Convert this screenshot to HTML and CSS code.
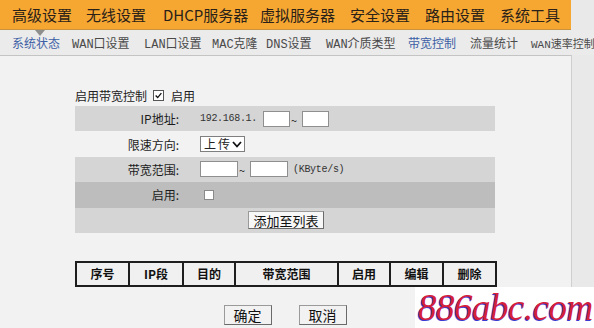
FILE: index.html
```html
<!DOCTYPE html>
<html lang="zh-CN">
<head>
<meta charset="utf-8">
<title>带宽控制</title>
<link rel="stylesheet" href="styles.css">
</head>
<body>
<div class="page">
  <header class="topbar">
    <span class="top-item">高级设置</span>
    <span class="top-item">无线设置</span>
    <span class="top-item">DHCP服务器</span>
    <span class="top-item">虚拟服务器</span>
    <span class="top-item">安全设置</span>
    <span class="top-item">路由设置</span>
    <span class="top-item">系统工具</span>
  </header>
  <nav class="subnav">
    <span class="notch"></span>
    <span class="sub-item active">系统状态</span>
    <span class="sub-item">WAN口设置</span>
    <span class="sub-item">LAN口设置</span>
    <span class="sub-item">MAC克隆</span>
    <span class="sub-item">DNS设置</span>
    <span class="sub-item">WAN介质类型</span>
    <span class="sub-item active">带宽控制</span>
    <span class="sub-item">流量统计</span>
    <span class="sub-item">WAN速率控制</span>
  </nav>
  <main class="panel">
    <div class="form">
      <div class="enable-line">
        <span>启用带宽控制</span>
        <span class="check checked"><svg viewBox="0 0 11 11" width="11" height="11"><path d="M2 5.5 L4.5 8 L9 2.5" fill="none" stroke="#111" stroke-width="1.6"/></svg></span>
        <span>启用</span>
      </div>
      <div class="rows">
        <div class="row shade">
          <span class="label">IP地址:</span>
          <span class="value">
            <span class="mono">192.168.1.</span>
            <span class="box ip"></span>
            <span class="tilde">~</span>
            <span class="box ip"></span>
          </span>
        </div>
        <div class="row">
          <span class="label">限速方向:</span>
          <span class="value">
            <span class="select"><span class="sel-text">上传</span><svg class="sel-arrow" viewBox="0 0 10 7" width="10" height="7"><path d="M1 1 L5 5.5 L9 1" fill="none" stroke="#111" stroke-width="1.8"/></svg></span>
          </span>
        </div>
        <div class="row shade">
          <span class="label">带宽范围:</span>
          <span class="value">
            <span class="box bw"></span>
            <span class="tilde">~</span>
            <span class="box bw"></span>
            <span class="mono unit">(KByte/s)</span>
          </span>
        </div>
        <div class="row dark">
          <span class="label">启用:</span>
          <span class="value"><span class="check small"></span></span>
        </div>
        <div class="row shade">
          <span class="label"></span>
          <span class="value"><span class="btn add">添加至列表</span></span>
        </div>
      </div>
      <table class="list">
        <tr>
          <th class="c1">序号</th>
          <th class="c2">IP段</th>
          <th class="c3">目的</th>
          <th class="c4">带宽范围</th>
          <th class="c5">启用</th>
          <th class="c6">编辑</th>
          <th class="c7">删除</th>
        </tr>
      </table>
      <div class="actions">
        <span class="btn act">确定</span>
        <span class="btn act">取消</span>
      </div>
    </div>
  </main>
  <div class="watermark">886abc.com</div>
</div>
</body>
</html>
```

FILE: styles.css
```css
html, body {
  margin: 0;
  padding: 0;
}
body {
  background: #e9e9e9;
  font-family: "Noto Sans CJK SC", "DejaVu Sans", sans-serif;
  color: #222;
  width: 594px;
  height: 328px;
  overflow: hidden;
}
.page {
  position: relative;
  width: 594px;
  height: 328px;
  overflow: hidden;
}
.topbar {
  width: 559px;
  height: 29px;
  background: #f6a732;
  border-bottom: 1px solid #c9923c;
  display: grid;
  grid-template-columns: 74px 77px 97px 90px 75px 75px 80px;
  padding-left: 12px;
  box-sizing: content-box;
  align-items: center;
  font-size: 15px;
  line-height: 29px;
  color: #2a2118;
  white-space: nowrap;
}
.subnav {
  position: relative;
  height: 25px;
  display: grid;
  grid-template-columns: 60px 72px 68px 54px 60px 82px 62px 61px 62px;
  padding-left: 12px;
  align-items: center;
  font-family: "Liberation Mono", "Noto Sans CJK SC", monospace;
  font-size: 12px;
  color: #4a4a4a;
  white-space: nowrap;
  background: #ebebeb;
}
.sub-item:last-child { font-size: 11px; }
.sub-item.active { color: #3d5fa6; }
.notch {
  position: absolute;
  left: 35px;
  top: 0;
  width: 0;
  height: 0;
  border-left: 5px solid transparent;
  border-right: 5px solid transparent;
  border-top: 6px solid #8e8e8e;
}
.panel {
  width: 571px;
  height: 274px;
  background: #f2f2f2;
  border-top: 1px solid #c4c4c4;
  border-right: 1px solid #cfcfcf;
  box-sizing: content-box;
}
.form {
  padding: 33px 0 0 75px;
  width: 420px;
  font-size: 12px;
}
.enable-line {
  display: flex;
  align-items: center;
  height: 12px;
}
.enable-line .check { margin: 0 7px 0 6px; }
.check {
  display: inline-flex;
  width: 11px;
  height: 11px;
  box-sizing: border-box;
  border: 1px solid #7a7a7a;
  background: #fff;
  align-items: center;
  justify-content: center;
}
.check.checked { border-color: #555; }
.check.small {
  width: 10px;
  height: 10px;
  margin-left: 4px;
  border-color: #8a8a8a;
}
.rows {
  margin-top: 5px;
}
.row {
  display: grid;
  grid-template-columns: 104px 1fr;
  height: 25.4px;
  align-items: center;
}
.row.shade { background: #d5d5d5; }
.row.dark { background: #bdbdbd; }
.label {
  text-align: right;
  color: #1c1c1c;
}
.value {
  display: flex;
  align-items: center;
  padding-left: 21px;
  white-space: nowrap;
}
.mono {
  font-family: "Liberation Mono", monospace;
  font-size: 10px;
  letter-spacing: -0.3px;
  color: #333;
}
.box {
  display: inline-block;
  height: 16px;
  box-sizing: border-box;
  background: #fff;
  border: 1px solid #8f8f8f;
}
.box.ip { width: 27px; }
.row .mono + .box { margin-left: 6px; }
.box.bw { width: 38px; }
.tilde {
  width: 12px;
  font-size: 11px;
  line-height: 10px;
  align-self: flex-start;
  margin-top: 4px;
  padding-left: 1px;
  box-sizing: border-box;
}
.unit { margin-left: 5px; }
.select {
  display: inline-flex;
  align-items: center;
  justify-content: space-between;
  height: 16px;
  box-sizing: border-box;
  width: 45px;
  padding: 0 3px 0 3px;
  background: #fff;
  border: 1px solid #7f7f7f;
  font-size: 12px;
  line-height: 14px;
  white-space: nowrap;
}
.sel-text { letter-spacing: 2px; }
.sel-arrow { flex-shrink: 0; }
.btn {
  display: inline-flex;
  align-items: center;
  justify-content: center;
  box-sizing: border-box;
  background: #f7f7f7;
  border: 1px solid #9a9a9a;
  border-right-color: #6a6a6a;
  border-bottom-color: #6a6a6a;
  color: #111;
  white-space: nowrap;
}
.btn.add {
  margin-left: 48px;
  width: 76px;
  height: 18px;
  font-size: 13px;
}
.list {
  margin-top: 28px;
  width: 420px;
  border-collapse: collapse;
  table-layout: fixed;
}
.list th {
  height: 22px;
  border: 2px solid #1e1e1e;
  font-weight: bold;
  font-size: 12px;
  color: #111;
  padding: 0;
  background: #f0f0f0;
}
.c1 { width: 51px; }
.c2 { width: 52px; }
.c3 { width: 50px; }
.c4 { width: 101px; }
.c5 { width: 50px; }
.c6 { width: 51px; }
.c7 { width: 51px; }
.actions {
  display: flex;
  justify-content: center;
  gap: 27px;
  margin-top: 18px;
}
.btn.act {
  width: 48px;
  height: 20px;
  font-size: 14px;
  background: #f2f2f2;
}
.watermark {
  position: absolute;
  left: 415px;
  top: 287px;
  width: 179px;
  height: 41px;
  background: #ffffff;
  font-family: "Liberation Serif", serif;
  font-style: italic;
  font-size: 37px;
  line-height: 41px;
  padding-left: 3px;
  box-sizing: border-box;
  color: #d4203c;
  text-shadow: -1px 1px 0 #3a3ad0;
  white-space: nowrap;
  letter-spacing: -0.5px;
}
```
